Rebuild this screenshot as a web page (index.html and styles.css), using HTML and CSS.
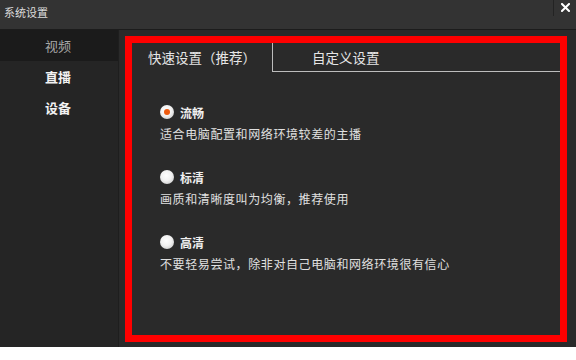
FILE: index.html
```html
<!DOCTYPE html>
<html>
<head>
<meta charset="utf-8">
<link rel="stylesheet" href="styles.css">
</head>
<body>
<div class="window">
  <div class="titlebar">
    <span class="title">系统设置</span>
    <button class="close" aria-label="close">
      <svg width="9" height="9" viewBox="0 0 9 9"><path d="M1 1L8 8M8 1L1 8" stroke="#fff" stroke-width="2" stroke-linecap="square"/></svg>
    </button>
  </div>
  <div class="body">
    <nav class="sidebar">
      <div class="nav-item active">视频</div>
      <div class="nav-item">直播</div>
      <div class="nav-item">设备</div>
    </nav>
    <main class="main">
      <div class="frame">
        <div class="tabs">
          <div class="tab selected">快速设置（推荐）</div>
          <div class="tab">自定义设置</div>
        </div>
        <div class="options">
          <div class="option">
            <div class="option-row"><span class="radio checked"></span><span class="label">流畅</span></div>
            <div class="desc">适合电脑配置和网络环境较差的主播</div>
          </div>
          <div class="option">
            <div class="option-row"><span class="radio"></span><span class="label">标清</span></div>
            <div class="desc">画质和清晰度叫为均衡，推荐使用</div>
          </div>
          <div class="option">
            <div class="option-row"><span class="radio"></span><span class="label">高清</span></div>
            <div class="desc">不要轻易尝试，除非对自己电脑和网络环境很有信心</div>
          </div>
        </div>
      </div>
    </main>
  </div>
</div>
</body>
</html>
```
FILE: styles.css
```css
* { box-sizing: border-box; }
html, body { margin: 0; padding: 0; background: #ffffff; }
body { font-family: "Noto Sans CJK SC", "Microsoft YaHei", sans-serif; color: #e2e2e2; }

.window {
  width: 576px;
  height: 347px;
  display: flex;
  flex-direction: column;
  background: #2a2a2a;
}

.titlebar {
  height: 30px;
  background: #333333;
  border-bottom: 1px solid #1c1c1c;
  display: flex;
  align-items: flex-start;
  justify-content: space-between;
  flex-shrink: 0;
}
.title {
  font-size: 11px;
  line-height: 24px;
  padding-left: 4px;
  color: #dcdcdc;
}
.close {
  width: 23px;
  height: 16px;
  margin: 0;
  padding: 0 0 1px 0;
  border: none;
  border-left: 1px solid #232323;
  background: #333333;
  display: flex;
  align-items: center;
  justify-content: center;
}

.body {
  flex: 1;
  display: flex;
  min-height: 0;
}

.sidebar {
  width: 119px;
  background: #252525;
  border-right: 1px solid #1e1e1e;
  flex-shrink: 0;
}
.nav-item {
  height: 31px;
  line-height: 31px;
  text-align: center;
  font-size: 13px;
  font-weight: bold;
  color: #f2f2f2;
  padding-right: 2px;
}
.nav-item.active {
  background: #1b1b1b;
  color: #a8a8a8;
  font-weight: normal;
}

.main {
  flex: 1;
  padding: 6px 9px 5px 6px;
  background: #2a2a2a;
}
.frame {
  height: 100%;
  border: 7px solid #ff0000;
  background: #2a2a2a;
}

.tabs {
  display: flex;
  height: 29px;
}
.tab {
  font-size: 13.5px;
  line-height: 28px;
  color: #e6e6e6;
}
.tab.selected {
  width: 140px;
  padding-left: 16px;
}
.tab:not(.selected) {
  flex: 1;
  border-left: 1px solid #bdbdbd;
  border-bottom: 1px solid #bdbdbd;
  padding-left: 39px;
}

.options {
  padding: 32px 0 0 28px;
}
.option {
  margin-bottom: 27px;
}
.option-row {
  display: flex;
  align-items: center;
  height: 16px;
}
.radio {
  width: 14px;
  height: 14px;
  border-radius: 50%;
  background: radial-gradient(circle at 45% 40%, #ffffff 0%, #f2f2f2 45%, #bdbdbd 100%);
  display: flex;
  align-items: center;
  justify-content: center;
  margin-right: 6px;
}
.radio.checked::after {
  content: "";
  width: 6px;
  height: 6px;
  border-radius: 50%;
  background: #ee5a0e;
}
.label {
  font-size: 12px;
  font-weight: bold;
  color: #f0f0f0;
}
.desc {
  margin-top: 6px;
  font-size: 12px;
  line-height: 16px;
  letter-spacing: 0.6px;
  color: #e0e0e0;
}
```
